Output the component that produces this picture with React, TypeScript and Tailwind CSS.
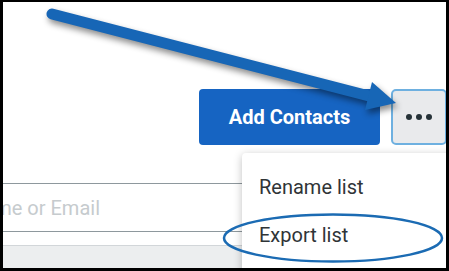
export default function App() {
  return (
    <div
      className="relative w-[449px] h-[271px] overflow-hidden bg-white border-black border-l-[3px] border-r-[3px] border-t-2 border-b-[3px]"
      style={{ fontFamily: 'Roboto, "Liberation Sans", sans-serif' }}
    >
      {/* action row */}
      <div className="flex justify-end gap-[11px] pt-[87px] mr-[-1px]">
        <button className="shrink-0 w-[181px] h-[56px] rounded-[4px] bg-[#1664c2] text-white text-[20px] font-bold">
          Add Contacts
        </button>
        <button className="shrink-0 w-[56px] h-[56px] rounded-[5px] bg-[#e9eaec] border-2 border-[#6eb0e0] flex items-center justify-center gap-[4px]">
          <span className="w-[6px] h-[6px] rounded-full bg-[#263238]" />
          <span className="w-[6px] h-[6px] rounded-full bg-[#263238]" />
          <span className="w-[6px] h-[6px] rounded-full bg-[#263238]" />
        </button>
      </div>

      {/* search field behind the menu */}
      <div className="mt-[38px] w-[239px]">
        <div className="h-[49px] border-t border-b border-[#8e989d] flex items-center">
          <div className="w-[97px] overflow-hidden flex justify-end">
            <span className="whitespace-nowrap text-[20px] text-[#c6cbce]">Search by Name or Email</span>
          </div>
        </div>
        <div className="h-[13px]" />
        <div className="h-[40px] bg-[#eceeef] border-t border-[#d2d6d9]" />
      </div>

      {/* dropdown menu */}
      <div className="absolute left-[239px] top-[151px] w-[220px] h-[140px] bg-white rounded-[4px] shadow-[0_2px_8px_rgba(0,0,0,0.25)] pt-[10px]">
        <div className="h-[48px] flex items-center pl-[17px] text-[20px] text-[#2f3437]">Rename list</div>
        <div className="h-[48px] flex items-center pl-[17px] text-[20px] text-[#2f3437]">Export list</div>
      </div>

      {/* annotation: ellipse */}
      <svg className="absolute left-[-3px] top-[-2px] pointer-events-none" width="449" height="271" viewBox="0 0 449 271">
        <ellipse cx="333" cy="238" rx="109" ry="23.5" fill="none" stroke="#1b6bb3" strokeWidth="2.5" />
      </svg>

      {/* annotation: arrow */}
      <svg
        className="absolute left-[-3px] top-[-2px] pointer-events-none drop-shadow-[2px_4px_3px_rgba(0,0,0,0.45)]"
        width="449"
        height="271"
        viewBox="0 0 449 271"
      >
        <line x1="52" y1="14" x2="369" y2="96" stroke="#1766b6" strokeWidth="11" strokeLinecap="round" />
        <polygon points="372,82 396,103 365,110" fill="#1766b6" />
      </svg>
    </div>
  )
}
